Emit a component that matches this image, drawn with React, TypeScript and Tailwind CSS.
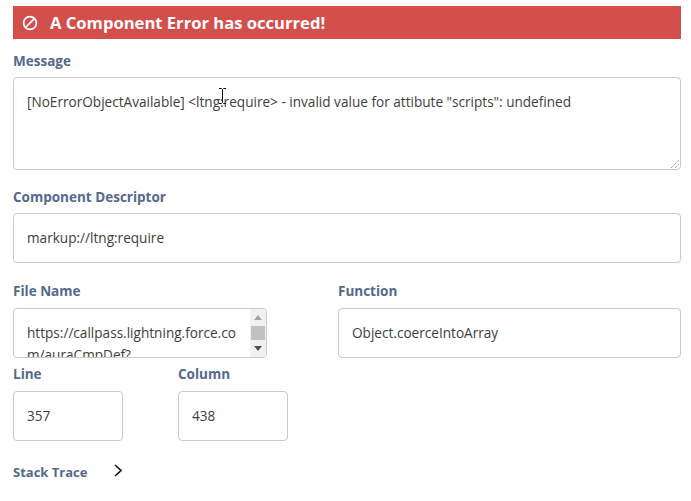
import React from "react";

const labelCls = "block text-[13.5px] leading-[18px] font-bold text-[#54698d]";
const boxCls = "border border-[#c9c9c9] rounded-[4px] bg-white text-[13.6px] text-[#3e3e3c] px-[13px]";

function Field({ label, value, className = "", gap = "mt-[7px]" }: { label: string; value: string; className?: string; gap?: string }) {
  return (
    <div className={className}>
      <label className={labelCls}>{label}</label>
      <div className={`${boxCls} ${gap} h-[50px] flex items-center`}>{value}</div>
    </div>
  );
}

export default function App() {
  return (
    <div className="relative w-[691px] h-[501px] bg-white overflow-hidden pl-[13px] pr-[10px] pt-[6px] font-['Open_Sans','Noto_Sans',sans-serif]">
      <div className="h-[33px] bg-[#d24f4c] flex items-center pl-2 text-white">
        <svg width="16" height="16" viewBox="0 0 16 16" fill="none" stroke="currentColor" strokeWidth="1.7" className="ml-px">
          <circle cx="8" cy="8" r="6.4" />
          <path d="M3.6 12.4 12.4 3.6" />
        </svg>
        <h1 className="ml-[12px] pt-px text-[16.6px] font-bold">A Component Error has occurred!</h1>
      </div>

      <label className={`${labelCls} mt-[13px]`}>Message</label>
      <div className={`${boxCls} relative mt-[7px] h-[93px] pt-[14px] leading-[20px]`}>
        [NoErrorObjectAvailable] &lt;ltng:require&gt; - invalid value for attibute "scripts": undefined
        <svg width="10" height="10" viewBox="0 0 10 10" className="absolute right-0 bottom-0" stroke="#777" strokeWidth="1" strokeDasharray="1 1">
          <path d="M1 9 9 1M5 9 9 5" />
        </svg>
      </div>

      <Field className="mt-[18px]" label="Component Descriptor" value="markup://ltng:require" />

      <div className="flex mt-[19px]">
        <div className="w-[254px]">
          <label className={labelCls}>File Name</label>
          <div className={`${boxCls} relative mt-2 h-[50px] overflow-hidden pt-[13px] pr-[26px] leading-[22px] break-all`}>
            https://callpass.lightning.force.com/auraCmpDef?
            <div className="absolute right-0 top-0 bottom-0 w-[16px] bg-[#f1f1f1] flex flex-col items-center justify-between py-[6px]">
              <svg width="8" height="5" viewBox="0 0 8 5"><path d="M4 0 8 5H0Z" fill="#a3a3a3" /></svg>
              <div className="absolute left-[1px] right-[1px] top-[17px] h-[14px] bg-[#c1c1c1]" />
              <svg width="8" height="5" viewBox="0 0 8 5"><path d="M0 0H8L4 5Z" fill="#505050" /></svg>
            </div>
          </div>
        </div>
        <Field className="w-[343px] ml-[71px]" label="Function" value="Object.coerceIntoArray" gap="mt-2" />
      </div>

      <div className="flex mt-[7px]">
        <Field className="w-[110px]" label="Line" value="357" gap="mt-2" />
        <Field className="w-[110px] ml-[55px]" label="Column" value="438" gap="mt-2" />
      </div>

      <div className="flex items-center mt-[22px]">
        <span className="block text-[13px] leading-[18px] font-bold text-[#54698d]">Stack Trace</span>
        <svg width="8" height="13" viewBox="0 0 8 13" fill="none" stroke="#111" strokeWidth="1.6" className="ml-[27px] -mt-[4px]">
          <path d="M1 1 7 6.5 1 12" />
        </svg>
      </div>

      <svg width="7" height="16" viewBox="0 0 7 16" fill="none" stroke="#111" strokeWidth="1" className="absolute left-[219px] top-[88px]">
        <path d="M0 .5H2.5L3.5 1.5 4.5 .5H7M3.5 1.5V14.5M0 15.5H2.5L3.5 14.5 4.5 15.5H7" />
      </svg>
    </div>
  );
}
